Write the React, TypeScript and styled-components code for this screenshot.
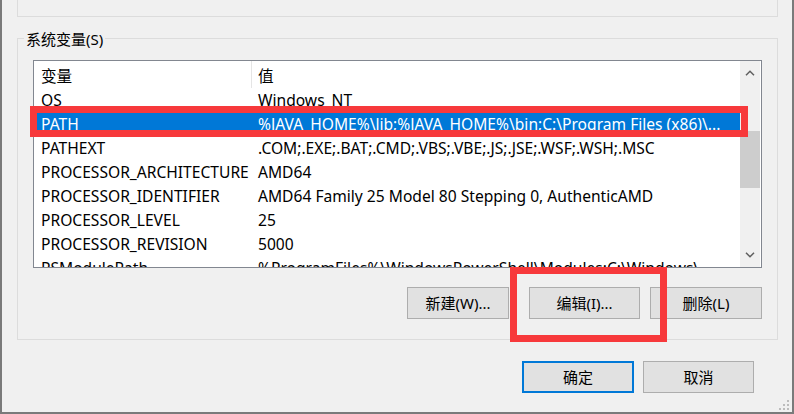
import React from 'react';
import styled, { createGlobalStyle } from 'styled-components';

const GlobalStyle = createGlobalStyle`
  html, body {
    margin: 0;
    padding: 0;
    background: #f0f0f0;
  }
  * {
    box-sizing: border-box;
  }
`;

const FONT = `"Noto Sans", "Noto Sans CJK SC", sans-serif`;

const Window = styled.div`
  position: relative;
  width: 794px;
  height: 414px;
  background: #f0f0f0;
  border-left: 2px solid #7a7a7a;
  border-right: 2px solid #7a7a7a;
  border-bottom: 2px solid #7a7a7a;
  display: flex;
  flex-direction: column;
  font-family: ${FONT};
  font-size: 15px;
  color: #000;
  overflow: hidden;
`;

const TopGroup = styled.div`
  margin-left: 15px;
  width: 761px;
  height: 17px;
  border: 1px solid #dcdcdc;
  border-top: none;
`;

const SysGroup = styled.div`
  position: relative;
  margin-top: 21px;
  margin-left: 15px;
  width: 761px;
  height: 302px;
  border: 1px solid #dcdcdc;
  padding: 21px 0 0 15px;
  display: flex;
  flex-direction: column;
`;

const GroupLabel = styled.span`
  position: absolute;
  top: -10px;
  left: 6px;
  padding: 0 2px;
  line-height: 20px;
  background: #f0f0f0;
`;

const ListWrap = styled.div`
  position: relative;
  width: 729px;
  height: 208px;
`;

const ListBox = styled.div`
  width: 100%;
  height: 100%;
  border: 1px solid #828790;
  background: #fff;
  overflow: hidden;
  display: flex;
`;

const Table = styled.div`
  flex: 1;
  min-width: 0;
  display: flex;
  flex-direction: column;
  font-size: 15.6px;
`;

const HeaderRow = styled.div`
  display: flex;
  height: 27px;
  padding-top: 3px;
  line-height: 24px;
  flex-shrink: 0;
`;

const Row = styled.div<{ $selected?: boolean }>`
  display: flex;
  height: 24px;
  line-height: 24px;
  flex-shrink: 0;
  background: ${p => (p.$selected ? '#0078d7' : 'transparent')};
  color: ${p => (p.$selected ? '#fff' : '#000')};
`;

const NameCell = styled.div<{ $divider?: boolean }>`
  width: 218px;
  flex-shrink: 0;
  padding-left: 7px;
  white-space: nowrap;
  overflow: hidden;
  border-right: 1px solid ${p => (p.$divider ? '#e5e5e5' : 'transparent')};
  margin-top: ${p => (p.$divider ? '-3px' : '0')};
  padding-top: ${p => (p.$divider ? '3px' : '0')};
`;

const ValueCell = styled.div`
  flex: 1;
  min-width: 0;
  padding-left: 6px;
  white-space: nowrap;
  overflow: hidden;
`;

const ScrollBar = styled.div`
  width: 20px;
  flex-shrink: 0;
  background: #f0f0f0;
  display: flex;
  flex-direction: column;
  margin-right: 1px;
`;

const ArrowBox = styled.div`
  height: 24px;
  display: flex;
  align-items: center;
  justify-content: center;
  flex-shrink: 0;
`;

const Track = styled.div`
  flex: 1;
  padding-top: 46px;
`;

const Thumb = styled.div`
  height: 57px;
  background: #cdcdcd;
`;

const RedFrame = styled.div<{ $left: number; $top: number; $width: number; $height: number }>`
  position: absolute;
  left: ${p => p.$left}px;
  top: ${p => p.$top}px;
  width: ${p => p.$width}px;
  height: ${p => p.$height}px;
  border: 7px solid #f7393b;
  pointer-events: none;
`;

const ButtonRow = styled.div`
  margin-top: 19px;
  width: 729px;
  display: flex;
  justify-content: flex-end;
  align-items: center;
`;

const Button = styled.button<{ $width: number; $gap?: number; $primary?: boolean }>`
  width: ${p => p.$width}px;
  height: 32px;
  margin-left: ${p => p.$gap ?? 0}px;
  padding: 0;
  background: #e1e1e1;
  border: ${p => (p.$primary ? '2px solid #0078d7' : '1px solid #adadad')};
  font-family: ${FONT};
  font-size: 15px;
  color: #000;
  line-height: 1;
`;

const Marked = styled.div<{ $gap: number }>`
  position: relative;
  margin-left: ${p => p.$gap}px;
  display: flex;
`;

const Footer = styled.div`
  margin-top: 21px;
  padding-right: 38px;
  display: flex;
  justify-content: flex-end;
  gap: 9px;
`;

const Grip = styled.svg`
  position: absolute;
  right: 2px;
  bottom: 1px;
`;

const rows: [string, string][] = [
  ['OS', 'Windows_NT'],
  ['PATH', '%JAVA_HOME%\\lib;%JAVA_HOME%\\bin;C:\\Program Files (x86)\\...'],
  ['PATHEXT', '.COM;.EXE;.BAT;.CMD;.VBS;.VBE;.JS;.JSE;.WSF;.WSH;.MSC'],
  ['PROCESSOR_ARCHITECTURE', 'AMD64'],
  ['PROCESSOR_IDENTIFIER', 'AMD64 Family 25 Model 80 Stepping 0, AuthenticAMD'],
  ['PROCESSOR_LEVEL', '25'],
  ['PROCESSOR_REVISION', '5000'],
  ['PSModulePath', '%ProgramFiles%\\WindowsPowerShell\\Modules;C:\\Windows\\...'],
];

const Chevron = ({ up }: { up?: boolean }) => (
  <svg width="10" height="6" viewBox="0 0 10 6">
    <path
      d={up ? 'M1 5.2 L5 1.2 L9 5.2' : 'M1 0.8 L5 4.8 L9 0.8'}
      fill="none"
      stroke="#606060"
      strokeWidth="1.5"
    />
  </svg>
);

const App = (): React.ReactElement => {
  return (
    <>
      <GlobalStyle />
      <Window>
        <TopGroup />
        <SysGroup>
          <GroupLabel>系统变量(S)</GroupLabel>
          <ListWrap>
            <ListBox>
              <Table>
                <HeaderRow>
                  <NameCell $divider>变量</NameCell>
                  <ValueCell>值</ValueCell>
                </HeaderRow>
                {rows.map(([name, value]) => (
                  <Row key={name} $selected={name === 'PATH'}>
                    <NameCell>{name}</NameCell>
                    <ValueCell>{value}</ValueCell>
                  </Row>
                ))}
              </Table>
              <ScrollBar>
                <ArrowBox>
                  <Chevron up />
                </ArrowBox>
                <Track>
                  <Thumb />
                </Track>
                <ArrowBox>
                  <Chevron />
                </ArrowBox>
              </ScrollBar>
            </ListBox>
            <RedFrame $left={-3} $top={46} $width={718} $height={31} />
          </ListWrap>
          <ButtonRow>
            <Button $width={102}>新建(W)...</Button>
            <Marked $gap={20}>
              <Button $width={111}>编辑(I)...</Button>
              <RedFrame $left={-19} $top={-20} $width={157} $height={75} />
            </Marked>
            <Button $width={112} $gap={10}>删除(L)</Button>
          </ButtonRow>
        </SysGroup>
        <Footer>
          <Button $width={112} $primary>确定</Button>
          <Button $width={111}>取消</Button>
        </Footer>
        <Grip width="12" height="12" viewBox="0 0 12 12">
          <rect x="9" y="1" width="2" height="2" fill="#bcbcbc" />
          <rect x="5" y="5" width="2" height="2" fill="#bcbcbc" />
          <rect x="9" y="5" width="2" height="2" fill="#bcbcbc" />
          <rect x="1" y="9" width="2" height="2" fill="#bcbcbc" />
          <rect x="5" y="9" width="2" height="2" fill="#bcbcbc" />
          <rect x="9" y="9" width="2" height="2" fill="#bcbcbc" />
        </Grip>
      </Window>
    </>
  );
};

export default App;
